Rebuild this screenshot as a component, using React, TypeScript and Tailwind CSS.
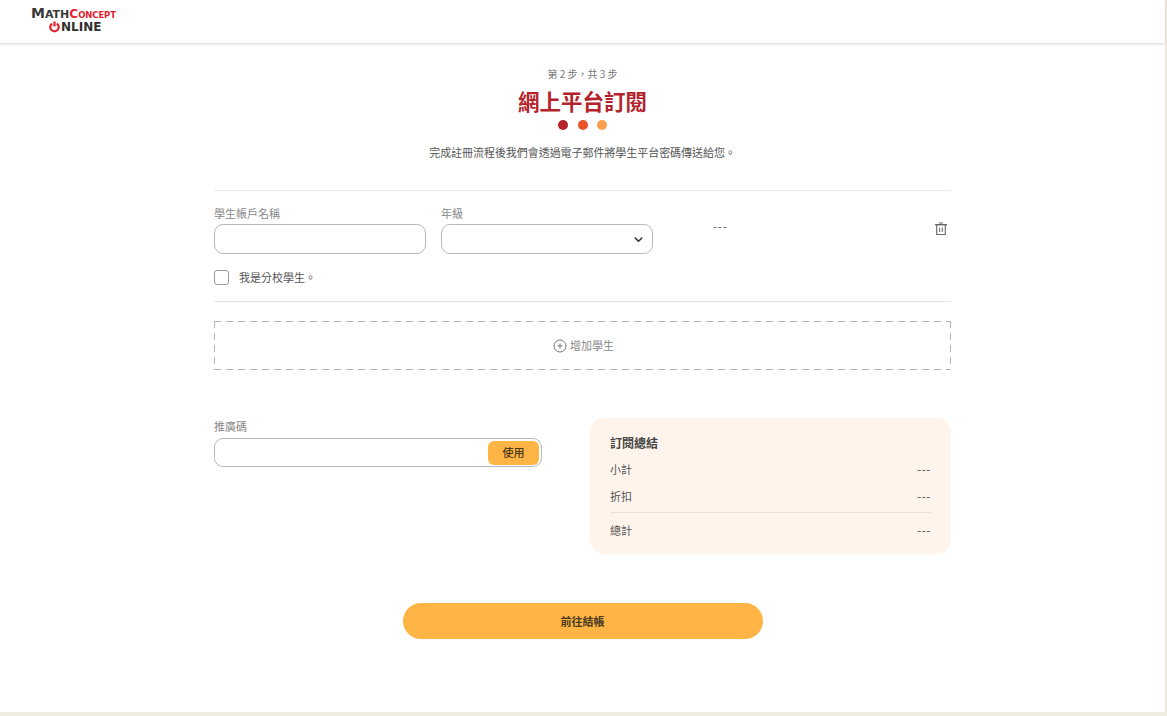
import React from "react";

const font = { fontFamily: '"Noto Sans CJK TC", "Noto Sans", sans-serif' };

function Row({ label, top }: { label: string; top: string }) {
  return (
    <div className={`flex items-center justify-between h-[18px] text-[11px] text-[#555] ${top}`}>
      <span>{label}</span>
      <span className="text-[12px] tracking-[0.5px]">---</span>
    </div>
  );
}

export default function App() {
  return (
    <div className="w-[1167px] h-[716px] overflow-hidden bg-[#efecdf] pr-[2px] pb-[4px]" style={font}>
      <div className="h-full bg-white flex flex-col">
        <header className="h-[43px] shrink-0 bg-white shadow-[0_1px_3px_rgba(0,0,0,0.18)] pl-[31px] pt-[6px]">
          <div className="w-[90px] leading-none select-none" style={{ fontFamily: '"DejaVu Sans", sans-serif' }}>
            <div className="flex items-baseline h-[15px] font-bold">
              <span className="text-[#3a3a3a] text-[14px]">M</span>
              <span className="text-[#3a3a3a] text-[11px]">ATH</span>
              <span className="text-[#ea1c30] text-[12px]">C</span>
              <span className="text-[#ea1c30] text-[8.5px] tracking-[-0.1px]">ONCEPT</span>
            </div>
            <div className="flex items-center pl-[18px] h-[12px] font-bold text-[#2f2f2f] text-[12px]">
              <svg width="11" height="12" viewBox="0 0 11 12" className="mr-[1px] shrink-0" fill="none" stroke="#e8202f" strokeWidth="2.2">
                <path d="M3.2 2.6a4.2 4.2 0 1 0 4.6 0" />
                <path d="M5.5 0.5v5" />
              </svg>
              <span>NLINE</span>
            </div>
          </div>
        </header>

        <main className="w-[737px] ml-[214px] flex flex-col">
          <div className="flex flex-col items-center pt-[23px]">
            <p className="text-[10px] leading-[15px] text-[#777]">第 2 步，共 3 步</p>
            <h1 className="mt-[5px] text-[21.5px] leading-[29px] font-bold text-[#b4232c]">網上平台訂閱</h1>
            <div className="flex gap-[9.5px] mt-[5px]">
              <span className="w-[10px] h-[10px] rounded-full bg-[#b4232c]" />
              <span className="w-[10px] h-[10px] rounded-full bg-[#e9542c]" />
              <span className="w-[10px] h-[10px] rounded-full bg-[#f9a04f]" />
            </div>
            <p className="mt-[14px] text-[11px] tracking-[-0.05px] leading-[16px] text-[#555]">完成註冊流程後我們會透過電子郵件將學生平台密碼傳送給您。</p>
          </div>

          <div className="mt-[30px] border-t border-[#ebebeb] h-[112px] border-b-[1px] border-b-[#e2e2e2]">
            <div className="flex mt-[14px]">
              <label className="w-[212px] mr-[15px]">
                <div className="text-[11px] leading-[16px] text-[#888]">學生帳戶名稱</div>
                <div className="mt-[3px] h-[30px] rounded-[9px] border border-[#b9b9b9] bg-white" />
              </label>
              <label className="w-[212px]">
                <div className="text-[11px] leading-[16px] text-[#888]">年級</div>
                <div className="mt-[3px] h-[30px] rounded-[9px] border border-[#b9b9b9] bg-white flex items-center justify-end pr-[8px]">
                  <svg width="11" height="11" viewBox="0 0 12 12" fill="none" stroke="#333" strokeWidth="1.6" strokeLinecap="round" strokeLinejoin="round">
                    <path d="M2.5 4.5 6 8l3.5-3.5" />
                  </svg>
                </div>
              </label>
              <div className="ml-[60px] mt-[13px] text-[12px] leading-[16px] text-[#666] tracking-[0.7px]">---</div>
              <div className="ml-auto mr-[3px] mt-[17px]">
                <svg width="14" height="14" viewBox="0 0 14 14" fill="none" stroke="#666">
                  <path d="M5 1h4" strokeWidth="1" />
                  <path d="M1 2.7h12" strokeWidth="1.4" />
                  <path d="M2.7 3v9.5h8.6V3" strokeWidth="1.1" />
                  <path d="M5.7 5.5v4.5M8.3 5.5v4.5" strokeWidth="1" />
                </svg>
              </div>
            </div>
            <div className="flex items-center mt-[15px]">
              <span className="w-[15px] h-[15px] rounded-[3px] border border-[#999] bg-white" />
              <span className="ml-[10px] text-[11px] leading-[16px] text-[#555]">我是分校學生。</span>
            </div>
          </div>

          <div className="mt-[19px] h-[49px] pl-[2px] flex items-center justify-center gap-[3px] text-[11px] text-[#888] bg-no-repeat [background-image:repeating-linear-gradient(to_right,#b5b5b5_0,#b5b5b5_7px,transparent_7px,transparent_12px),repeating-linear-gradient(to_right,#b5b5b5_0,#b5b5b5_7px,transparent_7px,transparent_12px),repeating-linear-gradient(to_bottom,#b5b5b5_0,#b5b5b5_7px,transparent_7px,transparent_12px),repeating-linear-gradient(to_bottom,#b5b5b5_0,#b5b5b5_7px,transparent_7px,transparent_12px)] [background-size:100%_1px,100%_1px,1px_100%,1px_100%] [background-position:0_0,0_100%,0_0,100%_0]">
            <svg width="14" height="14" viewBox="0 0 14 14" fill="none" stroke="#777" strokeWidth="1">
              <circle cx="7" cy="7" r="6" />
              <path d="M7 4.5v5M4.5 7h5" />
            </svg>
            <span>增加學生</span>
          </div>

          <div className="flex justify-between items-start mt-[48px]">
            <div className="w-[328px]">
              <div className="text-[11px] leading-[16px] text-[#888]">推廣碼</div>
              <div className="mt-[4px] h-[29px] rounded-[9px] border border-[#b9b9b9] bg-white flex items-center justify-end pr-[2px]">
                <button className="w-[51px] h-[24px] rounded-[6px] bg-[#ffb545] text-[11px] font-medium text-[#4a3a20]">使用</button>
              </div>
            </div>
            <aside className="w-[361px] h-[136px] rounded-[14px] bg-[#fff4ec] px-[20px] pt-[16px]">
              <h2 className="text-[12px] leading-[18px] font-bold text-[#444]">訂閱總結</h2>
              <Row label="小計" top="mt-[8px]" />
              <Row label="折扣" top="mt-[9px]" />
              <div className="mt-[7px] border-t border-[#e8e0da]" />
              <Row label="總計" top="mt-[8px]" />
            </aside>
          </div>

          <button className="self-center mt-[49px] w-[360px] h-[36px] rounded-full bg-[#ffb545] text-[11px] font-bold text-[#4a3a20]">前往結帳</button>
        </main>
      </div>
    </div>
  );
}
